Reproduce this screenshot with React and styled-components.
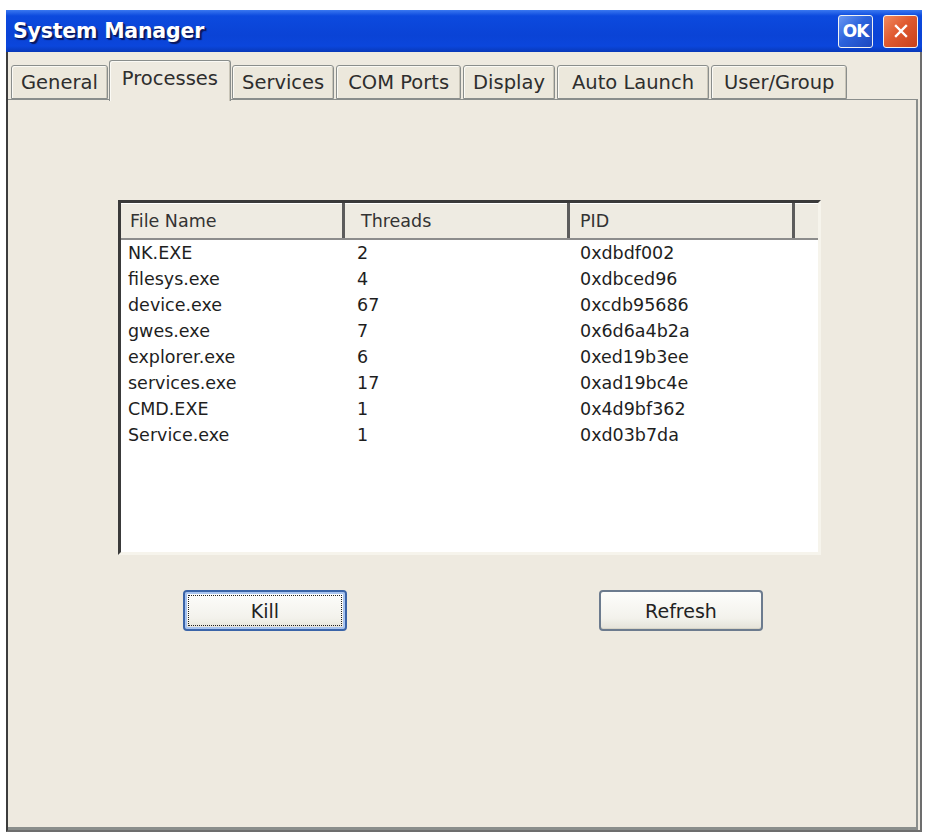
import styled, { createGlobalStyle } from "styled-components"

const Global = createGlobalStyle`
  body {
    margin: 0;
    background: #ffffff;
    font-family: "DejaVu Sans", Tahoma, sans-serif;
  }
`

const Window = styled.div`
  margin: 10px 0 0 6px;
  width: 916px;
  height: 822px;
  display: flex;
  flex-direction: column;
  border-left: 2px solid #3c3c3c;
  border-right: 2px solid #6d6d6d;
  border-bottom: 2px solid #6d6d6d;
  box-sizing: border-box;
  background: #eeeae0;
`

const TitleBar = styled.div`
  height: 42px;
  margin: 0 -2px;
  display: flex;
  align-items: center;
  padding: 0 4px 0 7px;
  background: linear-gradient(#3a78f0 0%, #0c4ade 14%, #0a43d6 60%, #0b46dc 86%, #0838b8 100%);
`

const Title = styled.div`
  flex: 1;
  color: #ffffff;
  font-weight: bold;
  font-size: 20.5px;
  text-shadow: 1px 1px 0 #0a1860, 2px 2px 1px #0a1860;
  letter-spacing: -0.2px;
`

const CapButton = styled.div`
  width: 35px;
  height: 33px;
  margin-left: 10px;
  border: 1.5px solid #f2f2f2;
  border-radius: 3px;
  box-sizing: border-box;
  display: flex;
  align-items: center;
  justify-content: center;
  color: #ffffff;
  font-weight: bold;
  font-size: 17px;
  letter-spacing: -1px;
  background: ${p => (p.close
    ? "linear-gradient(135deg, #f08a60 0%, #e05a30 45%, #c8401c 100%)"
    : "linear-gradient(135deg, #6a98f2 0%, #2c62dc 45%, #1c48c0 100%)")};
`

const TabStrip = styled.div`
  display: flex;
  align-items: flex-end;
  padding: 8px 0 0 3px;
  height: 39px;
`

const Tab = styled.div`
  height: ${p => (p.active ? "41px" : "34px")};
  padding: 0 ${p => p.pad}px;
  padding-top: ${p => (p.active ? "6px" : "0")};
  margin: ${p => (p.active ? "0 1px -2px -1px" : "0 2px 0 0")};
  display: flex;
  align-items: ${p => (p.active ? "flex-start" : "center")};
  box-sizing: border-box;
  border: 1px solid #8a8e8c;
  border-bottom: ${p => (p.active ? "none" : "1px solid #8a8e8c")};
  border-radius: 3px 3px 0 0;
  background: ${p => (p.active ? "#eeeae0" : "#ece8dc")};
  box-shadow: inset 1px 1px 0 #fbfaf5, inset -1px 0 0 #c9c5b8;
  color: #2e2e2e;
  font-size: 19.5px;
  position: relative;
  z-index: ${p => (p.active ? 2 : 1)};
`

const Panel = styled.div`
  flex: 1;
  margin: 0 2px 0 0;
  border-top: 1px solid #8a8e8c;
  border-right: 2px solid #8a8e8c;
  border-bottom: 3px solid #8a8e8c;
  padding: 100px 0 0 110px;
  position: relative;
  z-index: 1;
`

const ListView = styled.div`
  width: 703px;
  height: 355px;
  box-sizing: border-box;
  background: #ffffff;
  border-top: 3px solid #3a3a3a;
  border-left: 3px solid #3a3a3a;
  border-right: 3px solid #f6f4ec;
  border-bottom: 3px solid #f6f4ec;
  font-size: 17.5px;
  color: #1e1e1e;
`

const Grid = styled.div`
  display: grid;
  grid-template-columns: 224px 225px 225px 1fr;
`

const Header = styled(Grid)`
  height: 35px;
  background: #eeebe2;
  border-bottom: 2px solid #8c8c8c;
  box-shadow: inset 0 1px 0 #ffffff;
  color: #333333;
`

const HeadCell = styled.div`
  display: flex;
  align-items: center;
  padding-left: ${p => p.pad}px;
  border-right: ${p => (p.last ? "none" : "3px solid #5c5c5c")};
`

const Body = styled.div`
  padding-top: 0;
`

const Row = styled(Grid)`
  height: 26px;
  align-items: center;
`

const Cell = styled.div`
  padding-left: ${p => p.pad}px;
`

const Buttons = styled.div`
  display: flex;
  gap: 252px;
  padding: 35px 0 0 65px;
`

const PushButton = styled.div`
  width: 164px;
  height: 41px;
  box-sizing: border-box;
  border-radius: 4px;
  border: 2px solid ${p => (p.focused ? "#3a64a8" : "#6c7b8e")};
  background: linear-gradient(#fdfdfb, #f3f2ec 70%, #e4e2d8);
  box-shadow: ${p => (p.focused ? "inset 0 0 0 2px #a8c4f0" : "inset 0 -1px 0 #d6d3c6")};
  display: flex;
  align-items: center;
  justify-content: center;
  font-size: 19px;
  color: #222222;
  padding: 3px;
`

const FocusRect = styled.div`
  flex: 1;
  align-self: stretch;
  border: 1px dotted #222222;
  display: flex;
  align-items: center;
  justify-content: center;
`

const tabs = [
  ["General", 9],
  ["Processes", 12],
  ["Services", 9],
  ["COM Ports", 11],
  ["Display", 9],
  ["Auto Launch", 14],
  ["User/Group", 12],
]

const processes = [
  ["NK.EXE", "2", "0xdbdf002"],
  ["filesys.exe", "4", "0xdbced96"],
  ["device.exe", "67", "0xcdb95686"],
  ["gwes.exe", "7", "0x6d6a4b2a"],
  ["explorer.exe", "6", "0xed19b3ee"],
  ["services.exe", "17", "0xad19bc4e"],
  ["CMD.EXE", "1", "0x4d9bf362"],
  ["Service.exe", "1", "0xd03b7da"],
]

const CloseIcon = () => (
  <svg width="16" height="16" viewBox="0 0 16 16">
    <path d="M3 3 L13 13 M13 3 L3 13" stroke="#ffffff" strokeWidth="2.4" strokeLinecap="square" />
  </svg>
)

export default function App() {
  return (
    <>
      <Global />
      <Window>
        <TitleBar>
          <Title>System Manager</Title>
          <CapButton>OK</CapButton>
          <CapButton close><CloseIcon /></CapButton>
        </TitleBar>
        <TabStrip>
          {tabs.map(([t, pad]) => (
            <Tab key={t} pad={pad} active={t === "Processes"}>{t}</Tab>
          ))}
        </TabStrip>
        <Panel>
          <ListView>
            <Header>
              <HeadCell pad={9}>File Name</HeadCell>
              <HeadCell pad={16}>Threads</HeadCell>
              <HeadCell pad={10}>PID</HeadCell>
              <HeadCell last />
            </Header>
            <Body>
              {processes.map(([name, threads, pid]) => (
                <Row key={name}>
                  <Cell pad={7}>{name}</Cell>
                  <Cell pad={12}>{threads}</Cell>
                  <Cell pad={10}>{pid}</Cell>
                  <Cell />
                </Row>
              ))}
            </Body>
          </ListView>
          <Buttons>
            <PushButton focused><FocusRect>Kill</FocusRect></PushButton>
            <PushButton>Refresh</PushButton>
          </Buttons>
        </Panel>
      </Window>
    </>
  )
}
